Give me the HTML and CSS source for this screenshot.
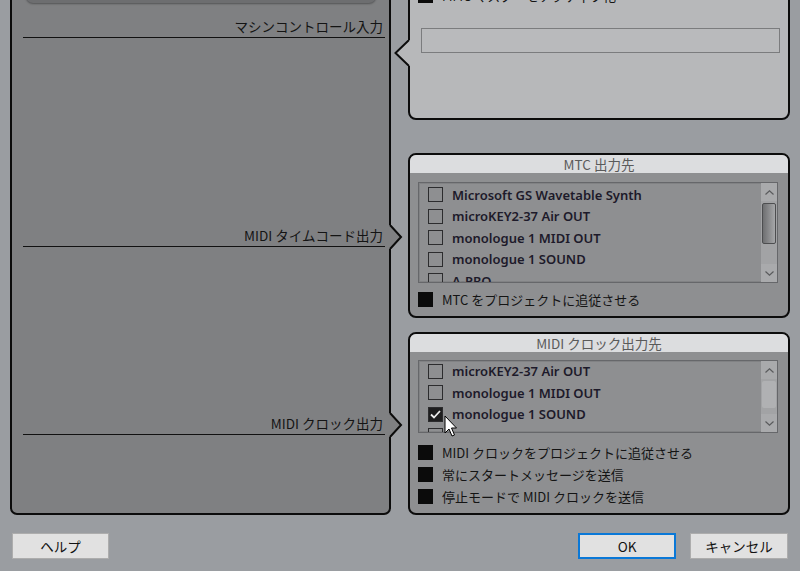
FILE: index.html
```html
<!DOCTYPE html>
<html lang="ja">
<head>
<meta charset="utf-8">
<link rel="stylesheet" href="styles.css">
</head>
<body>
<div class="main">
  <section class="left-panel">
    <div class="top-bar"></div>
    <div class="label l1">マシンコントロール入力</div>
    <div class="label l2">MIDI タイムコード出力<svg class="notch-out" viewBox="0 0 14 24"><polygon points="0,0 2,0 13,12 2,24 0,24" fill="#7f8082"/><polyline points="1,0 12,12 1,24" fill="none" stroke="#0c0c0c" stroke-width="2"/></svg></div>
    <div class="label l3">MIDI クロック出力<svg class="notch-out" viewBox="0 0 14 24"><polygon points="0,0 2,0 13,12 2,24 0,24" fill="#7f8082"/><polyline points="1,0 12,12 1,24" fill="none" stroke="#0c0c0c" stroke-width="2"/></svg></div>
  </section>
  <div class="right-col">
    <section class="panel p1">
      <svg class="notch-in" viewBox="0 0 16 26"><polygon points="16,0 14,0 1,13 14,26 16,26" fill="#b7b8ba"/><polyline points="15,0 1.5,13 15,26" fill="none" stroke="#0c0c0c" stroke-width="2"/></svg>
      <div class="body1">
        <div class="opt"><span class="blk"></span><span>MMC マスターをアクティブ化</span></div>
        <div class="field"></div>
      </div>
    </section>
    <section class="panel p2">
      <div class="head">MTC 出力先</div>
      <div class="body">
        <div class="list l-mtc">
          <div class="items">
            <div class="row"><span class="cb"></span>Microsoft GS Wavetable Synth</div>
            <div class="row"><span class="cb"></span>microKEY2-37 Air OUT</div>
            <div class="row"><span class="cb"></span>monologue 1 MIDI OUT</div>
            <div class="row"><span class="cb"></span>monologue 1 SOUND</div>
            <div class="row"><span class="cb"></span>A-PRO</div>
          </div>
          <div class="scroll">
            <div class="sb-btn"><svg width="9" height="5" viewBox="0 0 9 5"><polyline points="0.5,4.5 4.5,0.8 8.5,4.5" fill="none" stroke="#5a5b5d" stroke-width="1.2"/></svg></div>
            <div class="thumb t-mtc"></div>
            <div class="track"></div>
            <div class="sb-btn"><svg width="9" height="5" viewBox="0 0 9 5"><polyline points="0.5,0.5 4.5,4.2 8.5,0.5" fill="none" stroke="#5a5b5d" stroke-width="1.2"/></svg></div>
          </div>
        </div>
        <div class="opt first"><span class="blk"></span><span>MTC をプロジェクトに追従させる</span></div>
      </div>
    </section>
    <section class="panel p3">
      <div class="head">MIDI クロック出力先</div>
      <div class="body b3">
        <div class="list l-clk">
          <div class="items scrolled">
            <div class="row"><span class="cb"></span>Microsoft GS Wavetable Synth</div>
            <div class="row"><span class="cb"></span>microKEY2-37 Air OUT</div>
            <div class="row"><span class="cb"></span>monologue 1 MIDI OUT</div>
            <div class="row"><span class="cb checked"><svg width="13" height="13" viewBox="0 0 13 13"><polyline points="2,6.5 5,9.5 11,3" fill="none" stroke="#ececec" stroke-width="1.8"/></svg></span>monologue 1 SOUND</div>
            <div class="row"><span class="cb"></span>A-PRO</div>
          </div>
          <div class="scroll">
            <div class="sb-btn"><svg width="9" height="5" viewBox="0 0 9 5"><polyline points="0.5,4.5 4.5,0.8 8.5,4.5" fill="none" stroke="#5a5b5d" stroke-width="1.2"/></svg></div>
            <div class="thumb t-clk"></div>
            <div class="track"></div>
            <div class="sb-btn"><svg width="9" height="5" viewBox="0 0 9 5"><polyline points="0.5,0.5 4.5,4.2 8.5,0.5" fill="none" stroke="#5a5b5d" stroke-width="1.2"/></svg></div>
          </div>
        </div>
        <div class="opt first3"><span class="blk"></span><span>MIDI クロックをプロジェクトに追従させる</span></div>
        <div class="opt next"><span class="blk"></span><span>常にスタートメッセージを送信</span></div>
        <div class="opt next"><span class="blk"></span><span>停止モードで MIDI クロックを送信</span></div>
      </div>
    </section>
  </div>
</div>
<div class="buttons">
  <div class="btn">ヘルプ</div>
  <div class="spacer"></div>
  <div class="btn ok">OK</div>
  <div class="btn cancel">キャンセル</div>
</div>
<svg class="cursor" width="14" height="22" viewBox="0 0 14 22"><path d="M1,1 L1,18 L5,14 L8,21 L10.5,20 L7.5,13 L12.5,13 Z" fill="#ffffff" stroke="#000000" stroke-width="1" stroke-linejoin="miter"/></svg>
</body>
</html>
```

FILE: styles.css
```css
* { box-sizing: border-box; }
html, body { margin: 0; }
body {
  width: 800px;
  height: 571px;
  overflow: hidden;
  position: relative;
  background: #9a9da1;
  font-family: "Noto Sans CJK JP", "Noto Sans", sans-serif;
  font-size: 13px;
  color: #161616;
}
.main {
  display: grid;
  grid-template-columns: 381px 382px;
  column-gap: 17px;
  margin-top: -40px;
  padding-left: 10px;
  height: 555px;
}
.left-panel {
  background: #7f8082;
  border: 2px solid #0c0c0c;
  border-radius: 0 0 7px 7px;
  display: flex;
  flex-direction: column;
}
.top-bar {
  margin: 8px 0 0 14px;
  width: 350px;
  height: 33px;
  background: #6d6e70;
  border-radius: 0 0 7px 7px;
  box-shadow: 0 1px 2px rgba(0, 0, 0, 0.35);
}
.label {
  position: relative;
  margin: 0 4px 0 11px;
  font-size: 13.5px;
  line-height: 17px;
  padding: 0 2px 2px 0;
  border-bottom: 1px solid #111;
  text-align: right;
  color: #141414;
}
.l1 { margin-top: 15px; }
.l2 { margin-top: 189px; }
.l3 { margin-top: 168px; }
.notch-out {
  position: absolute;
  left: calc(100% + 4px);
  top: -2px;
  width: 14px;
  height: 24px;
}
.right-col {
  display: flex;
  flex-direction: column;
}
.panel {
  position: relative;
  border: 2px solid #0c0c0c;
  border-radius: 8px;
}
.p1 {
  height: 160px;
  background: #b7b8ba;
  border-radius: 0 0 8px 8px;
}
.p2 {
  height: 165px;
  margin-top: 33px;
  background: #8e8f91;
}
.p3 {
  height: 183px;
  margin-top: 14px;
  background: #8e8f91;
}
.notch-in {
  position: absolute;
  left: -16px;
  top: 78px;
  width: 16px;
  height: 26px;
}
.body1 {
  padding: 26px 8px 0 8px;
}
.field {
  margin: 25px 0 0 3px;
  height: 25px;
  border: 1px solid #7b7c7e;
  background: #b9babc;
}
.head {
  height: 18px;
  line-height: 18px;
  font-size: 13.5px;
  background: #dcdddf;
  color: #5a5a5a;
  text-align: center;
  border-radius: 6px 6px 0 0;
  overflow: hidden;
}
.body {
  padding: 9px 10px 0 8px;
}
.b3 { padding-top: 8px; }
.list {
  display: flex;
  border: 1px solid #66676a;
  box-shadow: inset 0 0 0 1px #818284;
}
.l-mtc { height: 101px; }
.l-clk { height: 73px; }
.items {
  flex: 1;
  overflow: hidden;
  padding: 1px 0 0 9px;
}
.row {
  height: 21.5px;
  display: flex;
  align-items: center;
  gap: 9px;
  font-family: "Noto Sans", sans-serif;
  font-weight: 600;
  font-size: 13px;
  color: #1d1a2a;
  white-space: nowrap;
}
.scrolled .row:first-child { margin-top: -23px; }
.cb {
  flex: none;
  width: 15px;
  height: 15px;
  border: 1px solid #2c2c2e;
  display: flex;
  align-items: center;
  justify-content: center;
}
.cb.checked { background: #1e1e1f; }
.scroll {
  width: 16px;
  display: flex;
  flex-direction: column;
  background: #a2a3a5;
}
.sb-btn {
  height: 18px;
  flex: none;
  display: flex;
  align-items: center;
  justify-content: center;
  background: #a9aaac;
}
.thumb {
  flex: none;
  margin: 2px 1px 0 1px;
  border-radius: 2px;
}
.t-mtc {
  height: 41px;
  border: 1px solid #4d4e50;
  background: linear-gradient(to right, #6e6f71, #a6a7a9);
}
.t-clk {
  height: 27px;
  background: #b0b1b3;
}
.track { flex: 1; }
.opt {
  display: flex;
  align-items: center;
  gap: 9px;
  height: 15px;
  line-height: 15px;
  white-space: nowrap;
  color: #141414;
}
.opt.first { margin-top: 9px; }
.opt.first3 { margin-top: 12px; }
.opt.next { margin-top: 7px; }
.blk {
  flex: none;
  width: 15px;
  height: 15px;
  background: #0b0b0b;
}
.buttons {
  display: flex;
  gap: 14px;
  padding: 0 12px;
  margin-top: 18px;
}
.spacer { flex: 1; }
.btn {
  width: 97px;
  height: 26px;
  background: #e1e1e1;
  border: 1px solid #adadad;
  font-size: 13.5px;
  line-height: 24px;
  text-align: center;
  color: #111;
}
.btn.ok {
  width: 98px;
  border: 2px solid #0a78d7;
  line-height: 22px;
}
.btn.cancel { width: 98px; }
.cursor {
  position: absolute;
  left: 444px;
  top: 415px;
}
```
